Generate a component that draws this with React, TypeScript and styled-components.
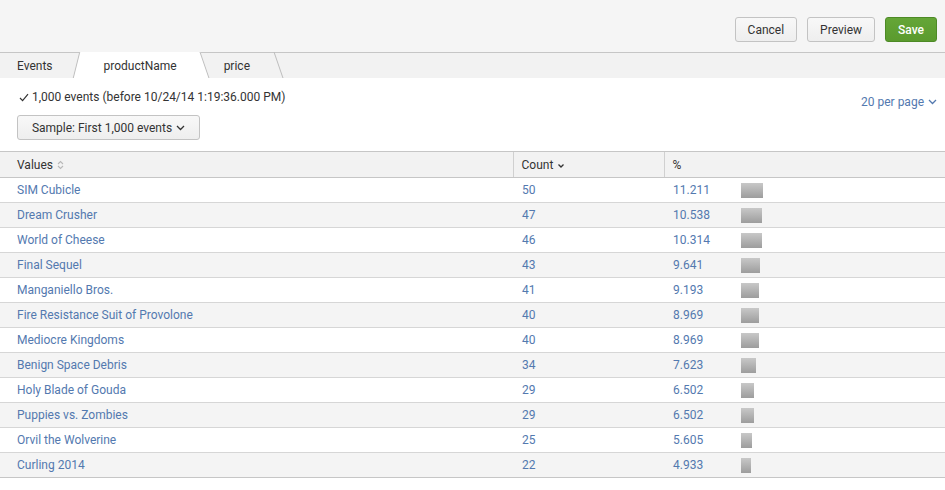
import React, { FunctionComponent } from "react";
import styled, { createGlobalStyle } from "styled-components";

const GlobalStyle = createGlobalStyle`
    html, body {
        margin: 0;
        padding: 0;
        background: #ffffff;
        font-family: Roboto, "Liberation Sans", Arial, sans-serif;
        color: #333333;
    }
    * { box-sizing: border-box; }
`

interface Row {
    name: string;
    count: number;
    pct: string;
}

const rows: Row[] = [
    { name: "SIM Cubicle", count: 50, pct: "11.211" },
    { name: "Dream Crusher", count: 47, pct: "10.538" },
    { name: "World of Cheese", count: 46, pct: "10.314" },
    { name: "Final Sequel", count: 43, pct: "9.641" },
    { name: "Manganiello Bros.", count: 41, pct: "9.193" },
    { name: "Fire Resistance Suit of Provolone", count: 40, pct: "8.969" },
    { name: "Mediocre Kingdoms", count: 40, pct: "8.969" },
    { name: "Benign Space Debris", count: 34, pct: "7.623" },
    { name: "Holy Blade of Gouda", count: 29, pct: "6.502" },
    { name: "Puppies vs. Zombies", count: 29, pct: "6.502" },
    { name: "Orvil the Wolverine", count: 25, pct: "5.605" },
    { name: "Curling 2014", count: 22, pct: "4.933" },
];

const Chevron: FunctionComponent<{ color?: string }> = ({ color = "currentColor" }) => (
    <svg width="9" height="6" viewBox="0 0 9 6">
        <path d="M1 1l3.5 3.5L8 1" fill="none" stroke={color} strokeWidth="1.3" />
    </svg>
);

const App: FunctionComponent = () => {
    return (
        <Page>
            <GlobalStyle />
            <Toolbar>
                <Button>Cancel</Button>
                <Button>Preview</Button>
                <Button primary>Save</Button>
            </Toolbar>
            <TabBar>
                <Tab>Events</Tab>
                <Tab active>productName</Tab>
                <Tab last>price</Tab>
            </TabBar>
            <Summary>
                <SummaryLeft>
                    <EventCount>
                        <svg width="10" height="9" viewBox="0 0 10 9">
                            <path d="M1 5l2.6 2.6L9 1.2" fill="none" stroke="#333" strokeWidth="1.2" />
                        </svg>
                        1,000 events (before 10/24/14 1:19:36.000 PM)
                    </EventCount>
                    <SampleButton>
                        Sample: First 1,000 events <Chevron />
                    </SampleButton>
                </SummaryLeft>
                <PerPage>
                    20 per page <Chevron />
                </PerPage>
            </Summary>
            <Table>
                <thead>
                    <tr>
                        <HeadCell>
                            Values
                            <SortIcon width="7" height="10" viewBox="0 0 7 10">
                                <path d="M1 4l2.5-2.5L6 4M1 6l2.5 2.5L6 6" fill="none" stroke="#b8b8b8" strokeWidth="1.1" />
                            </SortIcon>
                        </HeadCell>
                        <HeadCell width={151}>
                            Count
                            <SortIcon width="8" height="10" viewBox="0 0 8 10">
                                <path d="M1.5 4.5l2.5 2.5 2.5-2.5" fill="none" stroke="#333" strokeWidth="1.3" />
                            </SortIcon>
                        </HeadCell>
                        <HeadCell width={281}>%</HeadCell>
                    </tr>
                </thead>
                <tbody>
                    {rows.map((r, i) => (
                        <BodyRow key={r.name} odd={i % 2 === 1}>
                            <Cell>{r.name}</Cell>
                            <Cell>{r.count}</Cell>
                            <Cell>
                                <PctWrap>
                                    <PctText>{r.pct}</PctText>
                                    <Bar style={{ width: `${parseFloat(r.pct) * 2}px` }} />
                                </PctWrap>
                            </Cell>
                        </BodyRow>
                    ))}
                </tbody>
            </Table>
        </Page>
    );
}

export default App;


const Page = styled.div`
    width: 945px;
    height: 490px;
    background: #ffffff;
    overflow: hidden;
`

const Toolbar = styled.div`
    height: 53px;
    background: #f5f5f5;
    border-bottom: 1px solid #c6c6c6;
    display: flex;
    justify-content: flex-end;
    align-items: flex-start;
    gap: 10px;
    padding: 17px 8px 0 0;
`

const Button = styled.button<{ primary?: boolean }>`
    height: 25px;
    padding: 0 12px;
    font-family: Roboto, "Liberation Sans", Arial, sans-serif;
    font-size: 12px;
    border-radius: 3px;
    cursor: pointer;
    color: ${p => p.primary ? "#ffffff" : "#333333"};
    font-weight: ${p => p.primary ? 500 : 400};
    border: 1px solid ${p => p.primary ? "#4d8a26" : "#c3c3c3"};
    background: ${p => p.primary
        ? "linear-gradient(#65a637, #5a9a2e)"
        : "linear-gradient(#f8f8f8, #eeeeee)"};
`

const TabBar = styled.div`
    height: 25px;
    background: #f2f2f2;
    display: flex;
    align-items: stretch;
    font-size: 12px;
`

const Tab = styled.div<{ active?: boolean; last?: boolean }>`
    position: relative;
    display: flex;
    align-items: center;
    z-index: ${p => p.active ? 2 : 1};
    padding: ${p => p.active ? "0 32px 0 31px" : p.last ? "0 33px 0 15px" : "0 20px 0 17px"};
    color: #333333;

    &::before, &::after {
        content: "";
        position: absolute;
        top: -1px;
        bottom: 0;
        z-index: -1;
        display: ${p => p.active || p.last ? "block" : "none"};
    }

    &::before {
        left: 3px;
        width: 55%;
        transform: skewX(-14deg);
        background: ${p => p.active ? "#ffffff" : "transparent"};
        border-left: 1px solid ${p => p.active ? "#bdbdbd" : "transparent"};
    }

    &::after {
        right: 4px;
        width: 55%;
        transform: skewX(19deg);
        background: ${p => p.active ? "#ffffff" : "transparent"};
        border-right: 1px solid #bdbdbd;
    }
`

const Summary = styled.div`
    display: flex;
    justify-content: space-between;
    align-items: flex-start;
    padding: 13px 8px 0 17px;
    height: 73px;
`

const SummaryLeft = styled.div`
    display: flex;
    flex-direction: column;
    align-items: flex-start;
    gap: 11px;
`

const EventCount = styled.div`
    font-size: 12px;
    display: flex;
    align-items: center;
    gap: 3px;
    padding-left: 2px;
    line-height: 13px;
`

const SampleButton = styled.button`
    height: 25px;
    width: 183px;
    padding: 0 12px;
    font-family: Roboto, "Liberation Sans", Arial, sans-serif;
    font-size: 12px;
    color: #333333;
    border: 1px solid #c3c3c3;
    border-radius: 3px;
    background: linear-gradient(#f8f8f8, #eeeeee);
    display: flex;
    align-items: center;
    justify-content: center;
    gap: 4px;
`

const PerPage = styled.div`
    font-size: 12px;
    color: #5379af;
    display: flex;
    align-items: center;
    gap: 4px;
    margin-top: 4px;
`

const Table = styled.table`
    width: 945px;
    border-collapse: collapse;
    font-size: 12px;
    table-layout: fixed;
    border-bottom: 1px solid #c6c6c6;
`

const HeadCell = styled.th<{ width?: number }>`
    height: 26px;
    text-align: left;
    font-weight: 400;
    color: #333333;
    padding: 0 9px 0 17px;
    width: ${p => p.width ? `${p.width}px` : "auto"};
    background: #f2f2f2;
    border-top: 1px solid #c6c6c6;
    border-bottom: 1px solid #c6c6c6;
    & + & {
        border-left: 1px solid #d0d0d0;
        padding-left: 8px;
    }
`

const SortIcon = styled.svg`
    margin-left: 4px;
    vertical-align: -1px;
`

const BodyRow = styled.tr<{ odd: boolean }>`
    height: 25px;
    background: ${p => p.odd ? "#f4f4f4" : "#ffffff"};
    border-bottom: 1px solid #d6d6d6;
    &:last-child { border-bottom: none; }
`

const Cell = styled.td`
    padding: 0 9px 0 17px;
    color: #5379af;
    & + & {
        padding-left: 9px;
    }
`

const PctWrap = styled.div`
    display: flex;
    align-items: center;
`

const PctText = styled.span`
    width: 68px;
`

const Bar = styled.div`
    height: 15px;
    background: linear-gradient(#c8c8c8, #9d9d9d);
`
